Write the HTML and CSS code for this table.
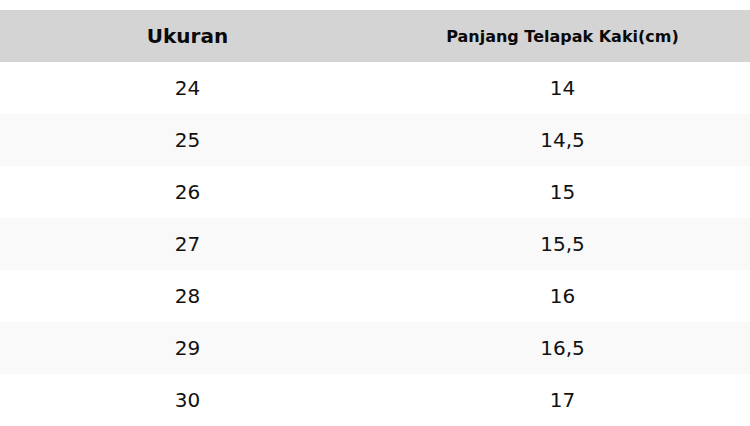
FILE: index.html
```html
<!DOCTYPE html>
<html>
<head>
<meta charset="utf-8">
<link rel="stylesheet" href="styles.css">
</head>
<body>
<table class="size-table">
  <thead>
    <tr><th class="h-main">Ukuran</th><th class="h-sub">Panjang Telapak Kaki(cm)</th></tr>
  </thead>
  <tbody>
    <tr><td>24</td><td>14</td></tr>
    <tr><td>25</td><td>14,5</td></tr>
    <tr><td>26</td><td>15</td></tr>
    <tr><td>27</td><td>15,5</td></tr>
    <tr><td>28</td><td>16</td></tr>
    <tr><td>29</td><td>16,5</td></tr>
    <tr><td>30</td><td>17</td></tr>
  </tbody>
</table>
</body>
</html>
```
FILE: styles.css
```css
html, body {
  margin: 0;
  padding: 0;
  background: #ffffff;
}
body {
  padding-top: 10px;
  font-family: "DejaVu Sans", sans-serif;
  color: #111111;
}
.size-table {
  width: 750px;
  border-collapse: collapse;
  table-layout: fixed;
}
.size-table th,
.size-table td {
  height: 52px;
  padding: 0;
  text-align: center;
  vertical-align: middle;
}
.size-table thead tr {
  background: #d4d4d4;
}
.size-table th {
  color: #0a0a0a;
  font-weight: bold;
}
.h-main {
  font-size: 20px;
}
.h-sub {
  font-size: 16px;
}
.size-table td {
  font-size: 20px;
}
.size-table tbody tr:nth-child(even) {
  background: #f9f9f9;
}
```
